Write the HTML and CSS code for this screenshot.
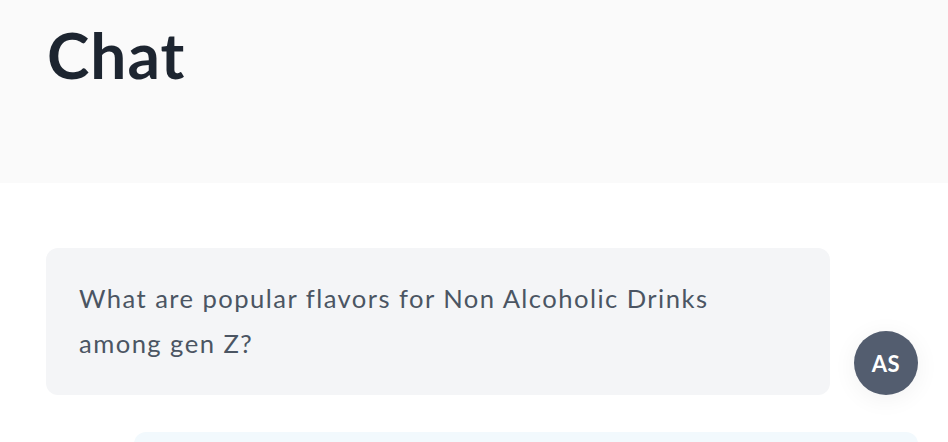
FILE: index.html
```html
<!DOCTYPE html>
<html>
<head>
<meta charset="utf-8">
<link rel="stylesheet" href="styles.css">
</head>
<body>
<header class="header">
  <h1 class="title">Chat</h1>
</header>
<main class="chat">
  <div class="row row-user">
    <div class="bubble bubble-user">What are popular flavors for Non Alcoholic Drinks among gen Z?</div>
    <div class="avatar">AS</div>
  </div>
  <div class="row row-bot">
    <div class="avatar avatar-bot"></div>
    <div class="bubble bubble-bot">&nbsp;</div>
  </div>
</main>
</body>
</html>
```
FILE: styles.css
```css
html, body {
  margin: 0;
  padding: 0;
  background: #ffffff;
  font-family: Lato, "Noto Sans", sans-serif;
  overflow: hidden;
}
.header {
  background: #fafafa;
  height: 183px;
  box-sizing: border-box;
  padding: 14px 47px 0;
}
.title {
  margin: 0;
  font-size: 64px;
  font-weight: 700;
  color: #1d2530;
  line-height: 82px;
  letter-spacing: 1px;
}
.chat {
  padding: 65px 30px 0 46px;
  display: flex;
  flex-direction: column;
  gap: 37px;
}
.row {
  display: flex;
  align-items: flex-end;
  gap: 24px;
}
.bubble {
  flex: 1;
  border-radius: 12px;
  padding: 28px 33px 29px 33px;
  font-size: 25.6px;
  line-height: 45px;
  letter-spacing: 1.45px;
  color: #4b5563;
}
.bubble-user {
  background: #f4f5f7;
}
.bubble-bot {
  background: #f2f9fd;
  height: 120px;
}
.avatar {
  flex: 0 0 64px;
  width: 64px;
  height: 64px;
  border-radius: 50%;
  background: #535d6f;
  color: #ffffff;
  font-weight: 700;
  font-size: 22px;
  letter-spacing: 0.5px;
  display: flex;
  align-items: center;
  justify-content: center;
  box-shadow: 0 4px 24px rgba(0,0,0,0.06);
}
.avatar-bot {
  visibility: hidden;
}
```
